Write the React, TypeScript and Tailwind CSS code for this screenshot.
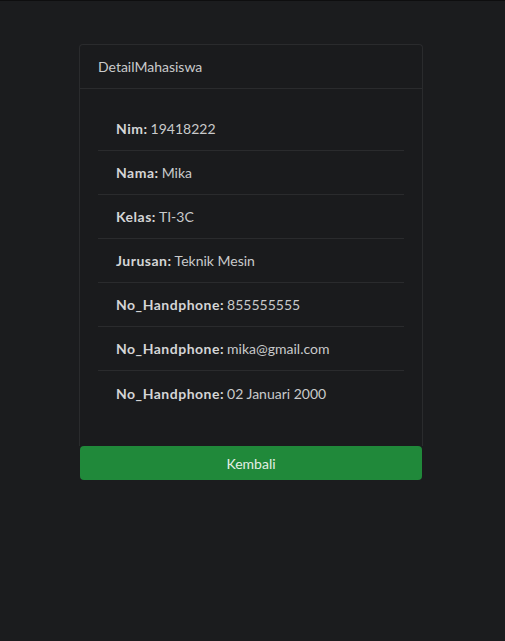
const rows: [string, string][] = [
  ["Nim:", "19418222"],
  ["Nama:", "Mika"],
  ["Kelas:", "TI-3C"],
  ["Jurusan:", "Teknik Mesin"],
  ["No_Handphone:", "855555555"],
  ["No_Handphone:", "mika@gmail.com"],
  ["No_Handphone:", "02 Januari 2000"],
];

export default function App() {
  return (
    <div className="min-h-[641px] w-full bg-[#1b1c1e] border-t border-[#0e0e0f] pt-[43px] font-['Lato',sans-serif] text-[14px] text-[#c9cacb]">
      <div className="ml-[79px] w-[344px]">
        {/* Card */}
        <div className="border border-b-0 border-[#2a2b2d] rounded-t-[4px] bg-[#1a1b1d]">
          <div className="h-[44px] flex items-center px-[18px] border-b border-[#2a2b2d]">
            DetailMahasiswa
          </div>
          <div className="pt-[18px] pb-[31px] px-[18px]">
            <ul>
              {rows.map(([label, value], i) => (
                <li
                  key={i}
                  className={`h-[44px] flex items-center px-[18px] ${i < rows.length - 1 ? "border-b border-[#2a2b2d]" : ""}`}
                >
                  <span className="font-bold tracking-[0.5px] text-[#d4d5d6] mr-[3px]">{label}</span>
                  <span>{value}</span>
                </li>
              ))}
            </ul>
          </div>
        </div>
        <button className="ml-px w-[342px] h-[34px] rounded-[4px] bg-[#20893a] text-[#e4efe6] text-[14px]">
          Kembali
        </button>
      </div>
    </div>
  );
}
